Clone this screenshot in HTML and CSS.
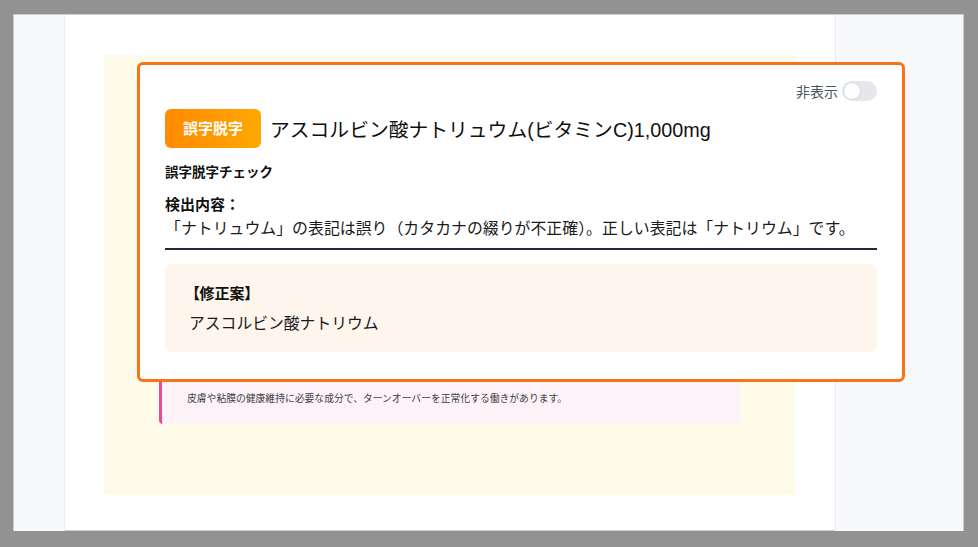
FILE: index.html
```html
<!DOCTYPE html>
<html lang="ja">
  <head>
    <meta charset="UTF-8" />
    <title>誤字脱字チェック</title>
    <link rel="stylesheet" href="styles.css">
  </head>
  <body>
    <div class="frame">
      <aside class="sidebar"></aside>

      <main class="main">
        <div class="sheet">
          <div class="note">
            <p class="note-title">アスコルビン酸ナトリウム(ビタミンC)1,000mg</p>
            <p class="note-text">皮膚や粘膜の健康維持に必要な成分で、ターンオーバーを正常化する働きがあります。</p>
          </div>
        </div>
      </main>

      <aside class="panel"></aside>

      <!-- 指摘ポップアップ -->
      <div class="popup">
        <div class="popup-top">
          <span class="hide-label">非表示</span>
          <span class="toggle"><span class="knob"></span></span>
        </div>

        <div class="title-row">
          <span class="badge">誤字脱字</span>
          <h2 class="target">アスコルビン酸ナトリュウム(ビタミンC)1,000mg</h2>
        </div>

        <p class="check-name">誤字脱字チェック</p>

        <div class="detail">
          <p class="detail-head">検出内容：</p>
          <p class="detail-text">「ナトリュウム」の表記は誤り（カタカナの綴りが不正確）。正しい表記は「ナトリウム」です。</p>
        </div>

        <div class="suggest">
          <p class="suggest-head">【修正案】</p>
          <p class="suggest-text">アスコルビン酸ナトリウム</p>
        </div>
      </div>
    </div>
  </body>
</html>
```

FILE: styles.css
```css
body {
  font-family: "Liberation Sans", "Noto Sans CJK JP", sans-serif;
  background-color: #929292;
  margin: 0;
  padding: 14px 0 0 13px;
  color: #111;
}
p,
h2 {
  margin: 0;
}
.frame {
  position: relative;
  width: 951px;
  height: 517px;
  box-sizing: border-box;
  border: 1px solid #cdcdcd;
  background: #fff;
  display: grid;
  grid-template-columns: 51px 770px 128px;
}
.sidebar {
  background: #f8f9fa;
  border-right: 1px solid #e8eaed;
}
.panel {
  background: #f8f9fb;
  border-left: 1px solid #e8eaed;
}
.main {
  padding: 40px 39px;
}
.sheet {
  width: 692px;
  height: 440px;
  background: #fefbe8;
  padding-top: 275px;
  box-sizing: border-box;
}
.note {
  margin-left: 55px;
  width: 581px;
  height: 94px;
  box-sizing: border-box;
  background: #fdf2f8;
  border-left: 3px solid #ec4899;
  border-radius: 4px 6px 6px 4px;
  padding: 20px 25px 0;
}
.note-title {
  font-size: 14px;
  font-weight: bold;
  line-height: 22px;
  margin-bottom: 20px;
}
.note-text {
  font-size: 9.8px;
  line-height: 14px;
  color: #3f3f46;
}

/* ポップアップ */
.popup {
  position: absolute;
  left: 123px;
  top: 47px;
  width: 768px;
  height: 320px;
  box-sizing: border-box;
  background: #fff;
  border: 3px solid #f97316;
  border-radius: 6px;
  padding: 16px 25px 0;
}
.popup-top {
  display: flex;
  justify-content: flex-end;
  align-items: center;
  gap: 4px;
  height: 20px;
}
.hide-label {
  font-size: 14px;
  color: #4b5563;
}
.toggle {
  width: 35px;
  height: 20px;
  border-radius: 10px;
  background: #e5e7eb;
  display: flex;
  align-items: center;
  padding: 0 2px;
  box-sizing: border-box;
}
.knob {
  width: 16px;
  height: 16px;
  border-radius: 50%;
  background: #fff;
  box-shadow: 0 0 0 1px #d4d7dc;
}
.title-row {
  display: flex;
  align-items: center;
  gap: 9px;
  margin-top: 8px;
}
.badge {
  height: 39px;
  line-height: 39px;
  padding: 0 18px;
  border-radius: 6px;
  background: linear-gradient(90deg, #ff8a00, #ffa700);
  color: #fff;
  font-size: 15px;
  font-weight: bold;
}
.target {
  font-size: 19.8px;
  font-weight: normal;
  color: #111;
}
.check-name {
  margin-top: 15px;
  font-size: 13.5px;
  font-weight: bold;
  line-height: 20px;
}
.detail {
  margin-top: 10px;
  padding-bottom: 7px;
  border-bottom: 2px solid #1f2937;
}
.detail-head {
  font-size: 15px;
  font-weight: bold;
  line-height: 24px;
}
.detail-text {
  font-size: 15.9px;
  line-height: 24px;
  color: #1a1a1a;
}
.suggest {
  margin-top: 14px;
  height: 88px;
  box-sizing: border-box;
  background: #fef5ec;
  border-radius: 8px;
  padding: 20px 24px 0;
}
.suggest-head {
  margin-left: 3px;
  font-size: 15px;
  font-weight: bold;
  line-height: 20px;
  font-feature-settings: "palt";
}
.suggest-text {
  margin-top: 8px;
  font-size: 15.8px;
  line-height: 24px;
  color: #1a1a1a;
}
```
